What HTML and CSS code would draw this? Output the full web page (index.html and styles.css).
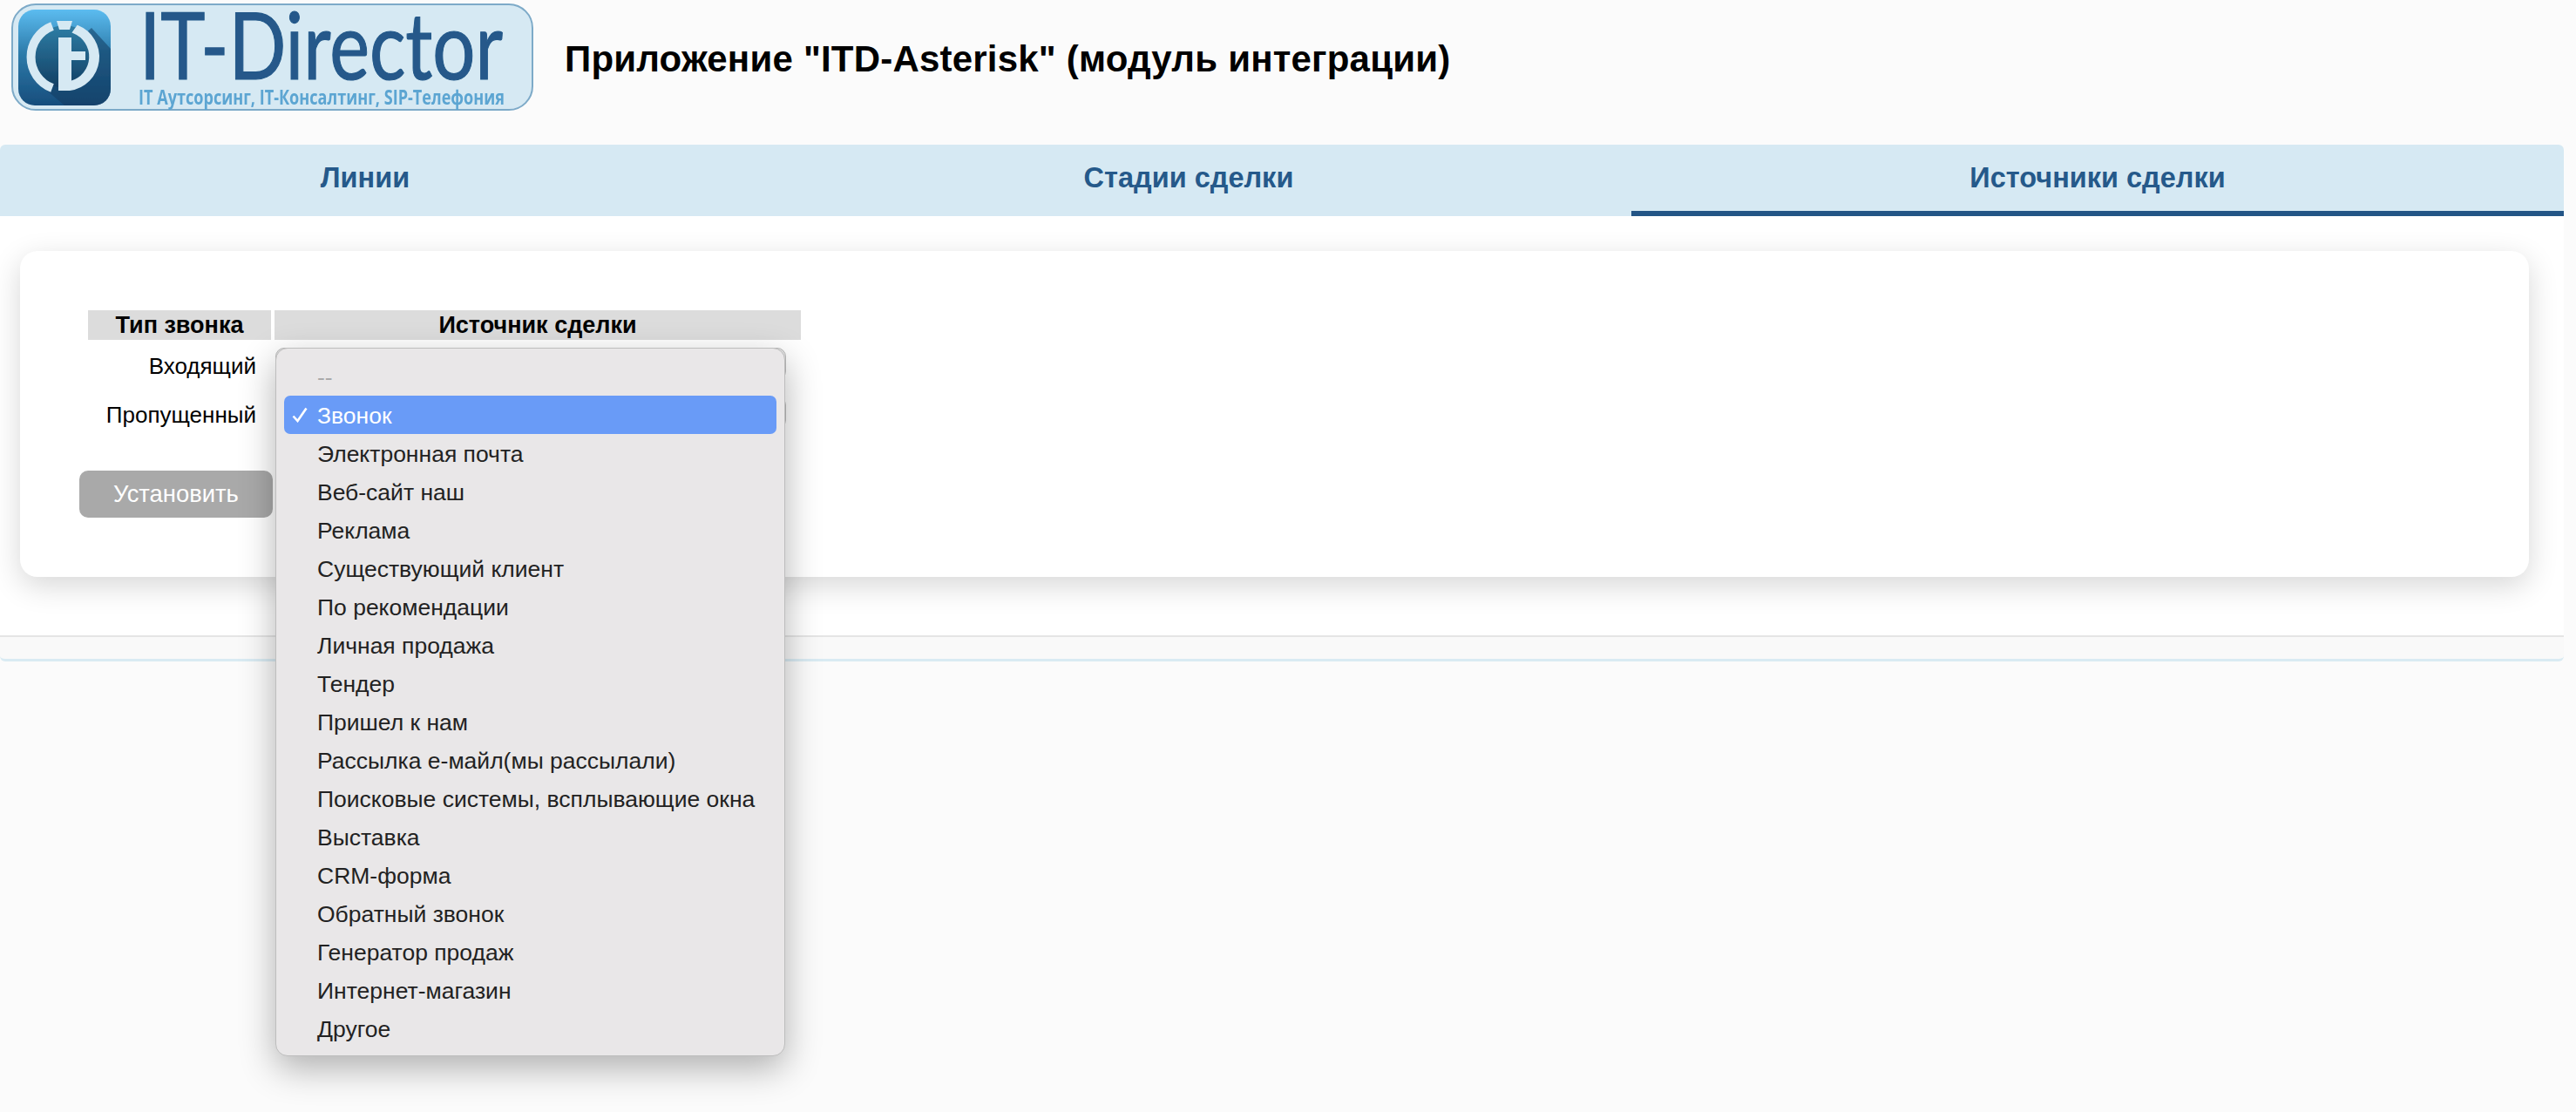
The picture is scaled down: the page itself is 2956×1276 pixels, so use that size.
FILE: index.html
```html
<!DOCTYPE html>
<html lang="ru">
<head>
<meta charset="utf-8">
<title>ITD-Asterisk</title>
<link rel="stylesheet" href="styles.css">
</head>
<body>
<div class="page">
  <header class="header">
    <svg class="logo" viewBox="13 4 599 123" xmlns="http://www.w3.org/2000/svg" aria-label="IT-Director">
      <defs>
        <linearGradient id="tile" x1="0" y1="0" x2="0" y2="1">
          <stop offset="0" stop-color="#5cbcf0"/>
          <stop offset="0.45" stop-color="#2d7cab"/>
          <stop offset="1" stop-color="#174d7c"/>
        </linearGradient>
        <linearGradient id="inner" x1="0" y1="0" x2="0" y2="1">
          <stop offset="0" stop-color="#2f7ea6"/>
          <stop offset="1" stop-color="#123f63"/>
        </linearGradient>
        <filter id="soft"><feGaussianBlur stdDeviation="0.55"/></filter>
        <clipPath id="tileClip"><rect x="21" y="11" width="106" height="110" rx="19"/></clipPath>
      </defs>
      <rect x="14" y="5" width="597" height="121" rx="27" fill="#d6e9f3" stroke="#7daac8" stroke-width="2"/>
      <g filter="url(#soft)">
        <rect x="21" y="11" width="106" height="110" rx="19" fill="url(#tile)"/>
        <path clip-path="url(#tileClip)" d="M105 32 L127 56 V121 H74 L40 92 Z" fill="#123a5e" opacity="0.55"/>
        <circle cx="74" cy="65" r="36" fill="url(#inner)"/>
        <path d="M60 30 A38 38 0 0 0 60 101" fill="none" stroke="#d6e9f3" stroke-width="10"/>
        <path d="M89 30 A38 38 0 0 1 80 103 H68 V44 H81 V60 H97 V68 H81 V94 A30 30 0 0 0 84 37 Z" fill="#d6e9f3" stroke="#d6e9f3" stroke-width="2"/>
        <path d="M65 24 H83 L80 34 H68 Z" fill="#d6e9f3"/>
        <text class="logo-name" x="160" y="91" textLength="417" lengthAdjust="spacingAndGlyphs">IT-Director</text>
        <text class="logo-sub" x="159" y="120" textLength="420" lengthAdjust="spacingAndGlyphs">IT Аутсорсинг, IT-Консалтинг, SIP-Телефония</text>
      </g>
    </svg>
    <h1 class="title">Приложение "ITD-Asterisk" (модуль интеграции)</h1>
  </header>

  <nav class="tabs">
    <div class="tab">Линии</div>
    <div class="tab tab-middle">Стадии сделки</div>
    <div class="tab tab-active">Источники сделки</div>
  </nav>

  <main class="panel">
    <section class="card">
      <div class="form-grid">
        <div class="head">Тип звонка</div>
        <div class="head">Источник сделки</div>
        <div class="label">Входящий</div>
        <div class="select-cell">
          <div class="select"></div>
          <ul class="menu">
            <li class="item item-empty">--</li>
            <li class="item item-selected">
              <svg class="check" viewBox="0 0 18 18" xmlns="http://www.w3.org/2000/svg"><path d="M1.5 10.5 L6.5 16 L16.5 1.5" fill="none" stroke="#fff" stroke-width="2.6"/></svg>
              Звонок
            </li>
            <li class="item">Электронная почта</li>
            <li class="item">Веб-сайт наш</li>
            <li class="item">Реклама</li>
            <li class="item">Существующий клиент</li>
            <li class="item">По рекомендации</li>
            <li class="item">Личная продажа</li>
            <li class="item">Тендер</li>
            <li class="item">Пришел к нам</li>
            <li class="item">Рассылка е-майл(мы рассылали)</li>
            <li class="item">Поисковые системы, всплывающие окна</li>
            <li class="item">Выставка</li>
            <li class="item">CRM-форма</li>
            <li class="item">Обратный звонок</li>
            <li class="item">Генератор продаж</li>
            <li class="item">Интернет-магазин</li>
            <li class="item">Другое</li>
          </ul>
        </div>
        <div class="label">Пропущенный</div>
        <div class="select-cell"><div class="select"></div></div>
      </div>
      <button class="submit" type="button">Установить</button>
    </section>
  </main>
  <footer class="footer"></footer>
</div>
</body>
</html>
```
FILE: styles.css
```css
* { box-sizing: border-box; }

html, body {
  margin: 0;
  height: 100%;
}

body {
  background: #fbfbfb;
  font-family: "Liberation Sans", Arial, sans-serif;
  color: #000;
  overflow: hidden;
}

.page {
  width: 2942px;
}

.header {
  display: flex;
  align-items: flex-start;
  height: 166px;
  padding: 4px 0 0 13px;
}

.logo {
  width: 599px;
  height: 123px;
  flex: none;
  overflow: visible;
}

.logo-name {
  font-family: Lato, "Open Sans", sans-serif;
  font-size: 107px;
  fill: #25598a;
  stroke: #25598a;
  stroke-width: 1.2px;
}

.logo-sub {
  font-family: "Open Sans", sans-serif;
  font-weight: 700;
  font-size: 24px;
  fill: #5ba5d2;
}

.title {
  margin: 40px 0 0 36px;
  font-size: 42px;
  line-height: 48px;
  font-weight: 700;
  letter-spacing: 0.2px;
}

.tabs {
  display: grid;
  grid-template-columns: 838px 1034px 1070px;
  height: 82px;
  background: #d6e9f3;
  border-radius: 6px 6px 0 0;
}

.tab {
  display: flex;
  align-items: center;
  justify-content: center;
  border-bottom: 6px solid transparent;
  font-size: 32.5px;
  font-weight: 700;
  color: #25598a;
}

.tab-middle {
  padding-left: 18px;
}

.tab-active {
  border-bottom-color: #235586;
}

.panel {
  background: #fff;
  padding: 40px 40px 67px 23px;
}

.card {
  height: 374px;
  padding: 68px 0 0 68px;
  background: #fff;
  border-radius: 20px;
  box-shadow: 0 10px 34px rgba(0, 0, 0, 0.16);
}

.form-grid {
  display: grid;
  grid-template-columns: 210px 604px;
  grid-template-rows: 43px 56px 37px;
  column-gap: 4px;
  margin-left: 10px;
}

.head {
  display: flex;
  align-items: center;
  justify-content: center;
  height: 34px;
  background: #dcdcdc;
  font-size: 27px;
  font-weight: 700;
}

.label {
  padding: 3px 17px 0 0;
  text-align: right;
  font-size: 26px;
  line-height: 36px;
}

.select-cell {
  position: relative;
  padding-left: 1px;
}

.select {
  width: 586px;
  height: 37px;
  border-radius: 10px;
  background: #e3e3e3;
  border: 1px solid #bdbdbd;
}

.menu {
  position: absolute;
  z-index: 5;
  top: 0;
  left: 1px;
  width: 585px;
  height: 813px;
  margin: 0;
  padding: 10px 9px;
  list-style: none;
  background: #e9e7e8;
  border: 1px solid #bdbdbd;
  border-radius: 14px;
  box-shadow: 0 14px 40px rgba(0, 0, 0, 0.3);
}

.item {
  position: relative;
  height: 44px;
  padding-left: 38px;
  border-radius: 7px;
  font-size: 26.5px;
  line-height: 46px;
  color: #222;
  white-space: nowrap;
}

.item-empty {
  color: #aaa;
}

.item-selected {
  background: #699bf7;
  color: #fff;
}

.check {
  position: absolute;
  left: 9px;
  top: 13px;
  width: 18px;
  height: 18px;
}

.submit {
  display: block;
  width: 222px;
  height: 54px;
  margin-top: 48px;
  padding: 0;
  border: 0;
  border-radius: 10px;
  background: #a9a9a9;
  color: #fff;
  font-family: inherit;
  font-size: 27.4px;
}

.footer {
  height: 30px;
  background: #f9f9f9;
  border-top: 2px solid #e5e5e5;
  border-bottom: 3px solid #d9ebf3;
  border-radius: 0 0 6px 6px;
}
```
